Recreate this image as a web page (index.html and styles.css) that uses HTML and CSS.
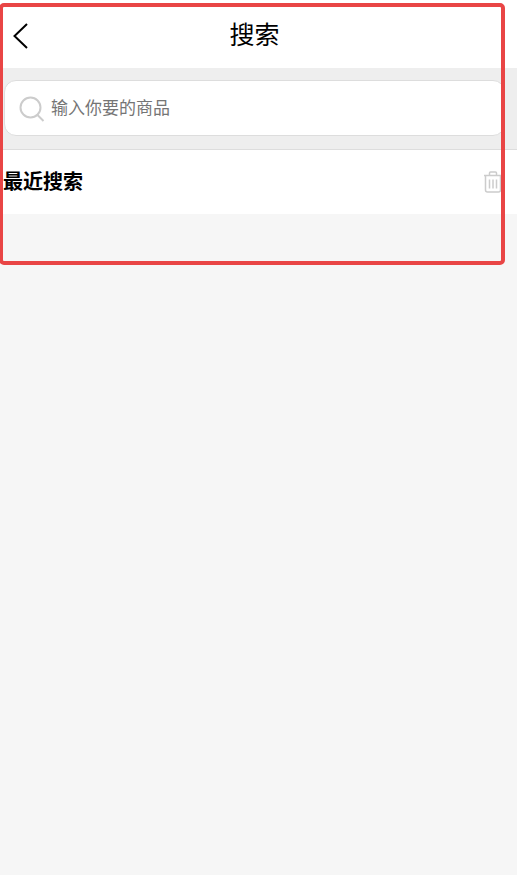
FILE: index.html
```html
<!DOCTYPE html>
<html lang="zh-CN">

<head>
    <meta charset="utf-8">
    <title>搜索</title>
    <link rel="stylesheet" href="styles.css">
</head>

<body>
    <div class="header">
        <svg class="back" width="18" height="28" viewBox="0 0 18 28">
            <path d="M15 2 L2.5 14 L15 26" fill="none" stroke="#000" stroke-width="2"/>
        </svg>
        <h1 class="title">搜索</h1>
    </div>

    <div class="search-band">
        <div class="search-box">
            <svg class="search-icon" width="26" height="26" viewBox="0 0 26 26">
                <circle cx="11.5" cy="11.5" r="10" fill="none" stroke="#ccc" stroke-width="2"/>
                <path d="M18.5 19 L24.5 25" fill="none" stroke="#ccc" stroke-width="2"/>
            </svg>
            <span class="placeholder">输入你要的商品</span>
        </div>
    </div>

    <div class="recent">
        <span class="recent-title">最近搜索</span>
        <svg class="trash" width="20" height="22" viewBox="0 0 20 22">
            <path d="M1 4.5 H19 M6.5 4 V2 Q6.5 1 7.5 1 H12.5 Q13.5 1 13.5 2 V4" fill="none" stroke="#ccc" stroke-width="1.5"/>
            <path d="M2.5 5 V19 Q2.5 21 4.5 21 H15.5 Q17.5 21 17.5 19 V5" fill="none" stroke="#ccc" stroke-width="1.5"/>
            <path d="M6.5 8.5 V17.5 M10 8.5 V17.5 M13.5 8.5 V17.5" fill="none" stroke="#ccc" stroke-width="1.5"/>
        </svg>
    </div>

    <div class="outline"></div>
</body>

</html>
```

FILE: styles.css
```css
html,
body {
    height: 100%;
}

body {
    margin: 0;
    background-color: #f6f6f6;
    font-family: "Liberation Sans", "Noto Sans CJK SC", sans-serif;
    overflow: hidden;
}

.header {
    height: 68px;
    padding-bottom: 2px;
    box-sizing: border-box;
    background-color: #fff;
    display: flex;
    align-items: center;
    justify-content: center;
    position: relative;
}

.back {
    position: absolute;
    left: 12px;
    top: 22px;
}

.title {
    margin: 0 8px 0 0;
    font-size: 25px;
    font-weight: normal;
    color: #000;
}

.search-band {
    height: 82px;
    padding: 12px 12px 0 4px;
    box-sizing: border-box;
    background-color: #eee;
    border-bottom: 1px solid #ddd;
}

.search-box {
    height: 56px;
    box-sizing: border-box;
    background-color: #fff;
    border: 1px solid #ddd;
    border-radius: 12px;
    display: flex;
    align-items: center;
    padding-left: 14px;
    gap: 6px;
}

.search-icon {
    margin-top: 2px;
}

.placeholder {
    font-size: 17px;
    color: #757575;
    margin-bottom: 3px;
}

.recent {
    height: 64px;
    background-color: #fff;
    display: flex;
    align-items: center;
    justify-content: space-between;
    padding: 0 14px 0 3px;
}

.recent-title {
    font-size: 20px;
    font-weight: bold;
    color: #000;
    margin-bottom: 3px;
}

.trash {
    margin-bottom: 1px;
}

.outline {
    position: absolute;
    left: -1px;
    top: 3px;
    width: 506px;
    height: 262px;
    box-sizing: border-box;
    border: 4px solid #e94545;
    border-radius: 5px;
}
```
